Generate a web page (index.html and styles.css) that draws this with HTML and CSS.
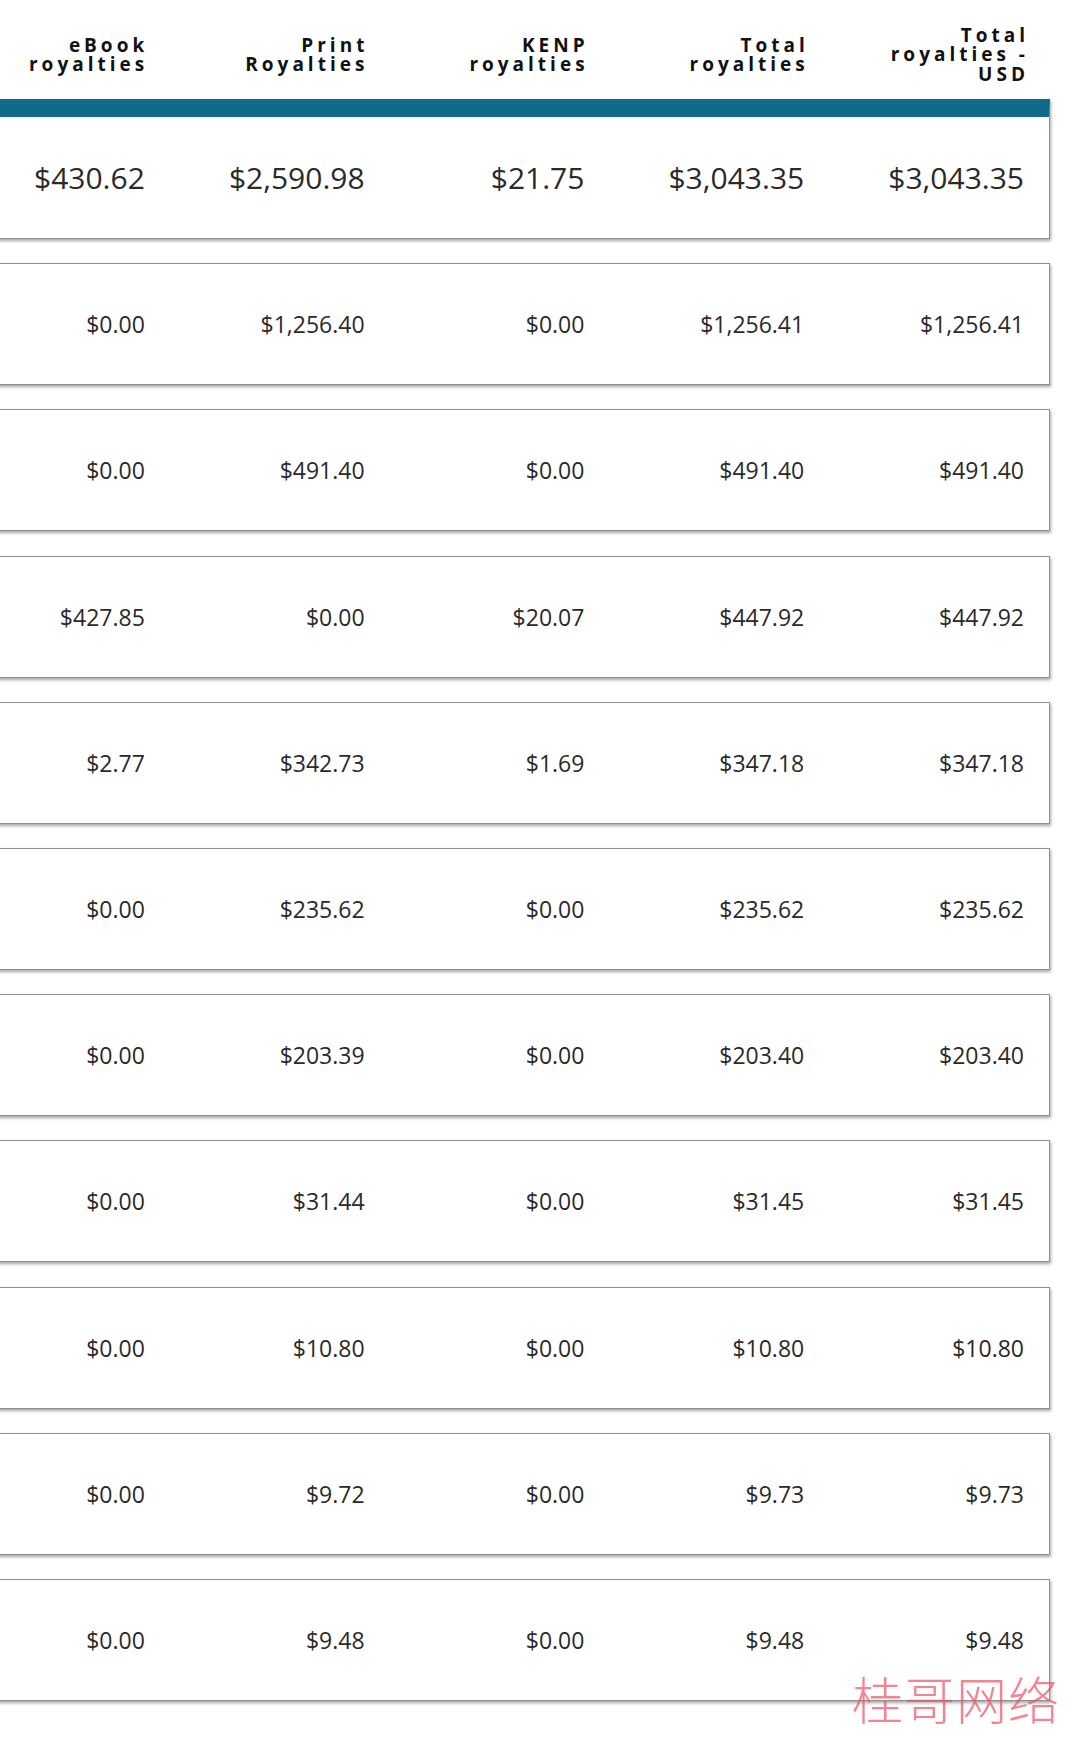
FILE: index.html
```html
<!DOCTYPE html>
<html lang="en">
<head>
<meta charset="utf-8">
<title>Royalties</title>
<link rel="stylesheet" href="styles.css">
</head>
<body>
<div class="viewport">
  <div class="table">
    <div class="head">
      <div class="th"><span>eBook royalties</span></div>
      <div class="th"><span>Print Royalties</span></div>
      <div class="th"><span>KENP royalties</span></div>
      <div class="th"><span>Total royalties</span></div>
      <div class="th"><span>Total royalties - USD</span></div>
    </div>

    <div class="card total">
      <div class="td">$430.62</div><div class="td">$2,590.98</div><div class="td">$21.75</div><div class="td">$3,043.35</div><div class="td">$3,043.35</div>
    </div>
    <div class="card">
      <div class="td">$0.00</div><div class="td">$1,256.40</div><div class="td">$0.00</div><div class="td">$1,256.41</div><div class="td">$1,256.41</div>
    </div>
    <div class="card">
      <div class="td">$0.00</div><div class="td">$491.40</div><div class="td">$0.00</div><div class="td">$491.40</div><div class="td">$491.40</div>
    </div>
    <div class="card">
      <div class="td">$427.85</div><div class="td">$0.00</div><div class="td">$20.07</div><div class="td">$447.92</div><div class="td">$447.92</div>
    </div>
    <div class="card">
      <div class="td">$2.77</div><div class="td">$342.73</div><div class="td">$1.69</div><div class="td">$347.18</div><div class="td">$347.18</div>
    </div>
    <div class="card">
      <div class="td">$0.00</div><div class="td">$235.62</div><div class="td">$0.00</div><div class="td">$235.62</div><div class="td">$235.62</div>
    </div>
    <div class="card">
      <div class="td">$0.00</div><div class="td">$203.39</div><div class="td">$0.00</div><div class="td">$203.40</div><div class="td">$203.40</div>
    </div>
    <div class="card">
      <div class="td">$0.00</div><div class="td">$31.44</div><div class="td">$0.00</div><div class="td">$31.45</div><div class="td">$31.45</div>
    </div>
    <div class="card">
      <div class="td">$0.00</div><div class="td">$10.80</div><div class="td">$0.00</div><div class="td">$10.80</div><div class="td">$10.80</div>
    </div>
    <div class="card">
      <div class="td">$0.00</div><div class="td">$9.72</div><div class="td">$0.00</div><div class="td">$9.73</div><div class="td">$9.73</div>
    </div>
    <div class="card">
      <div class="td">$0.00</div><div class="td">$9.48</div><div class="td">$0.00</div><div class="td">$9.48</div><div class="td">$9.48</div>
    </div>
  </div>
</div>
<div class="watermark">桂哥网络</div>
</body>
</html>
```

FILE: styles.css
```css
html, body {
  margin: 0;
  padding: 0;
  background: #ffffff;
}
body {
  width: 1080px;
  height: 1742px;
  overflow: hidden;
  position: relative;
  font-family: "Open Sans", "Noto Sans", sans-serif;
  color: #262626;
}
.viewport {
  width: 1080px;
  overflow: hidden;
}
.table {
  width: 1101px;
  margin-left: -51px;
}
.head {
  display: grid;
  grid-template-columns: repeat(5, 1fr);
  height: 99px;
  box-sizing: border-box;
  padding-top: 11px;
  align-items: center;
}
.th {
  display: flex;
  justify-content: flex-end;
  padding-right: 21px;
}
.th span {
  display: block;
  max-width: 160px;
  text-align: right;
  font-weight: 700;
  font-size: 19px;
  line-height: 19.5px;
  letter-spacing: 4px;
  color: #111111;
}
.card {
  display: grid;
  grid-template-columns: repeat(5, 1fr);
  align-items: center;
  height: 122px;
  box-sizing: border-box;
  border: 1px solid #8f8f8f;
  background: #ffffff;
  box-shadow: 1px 2px 3px rgba(0, 0, 0, 0.35);
  margin-bottom: 24.2px;
}
.card.total {
  height: 140px;
  border-top: 18px solid #0f6a8c;
  border-left-color: #0f6a8c;
}
.td {
  text-align: right;
  padding-right: 25px;
  font-size: 23px;
  color: #2a2a2a;
}
.card.total .td {
  font-size: 30px;
}
.watermark {
  position: absolute;
  left: 852px;
  top: 1668px;
  font-family: "Noto Sans CJK SC", sans-serif;
  font-weight: 300;
  font-size: 51px;
  line-height: 60px;
  color: rgba(238, 80, 100, 0.7);
  letter-spacing: 1px;
}
```
